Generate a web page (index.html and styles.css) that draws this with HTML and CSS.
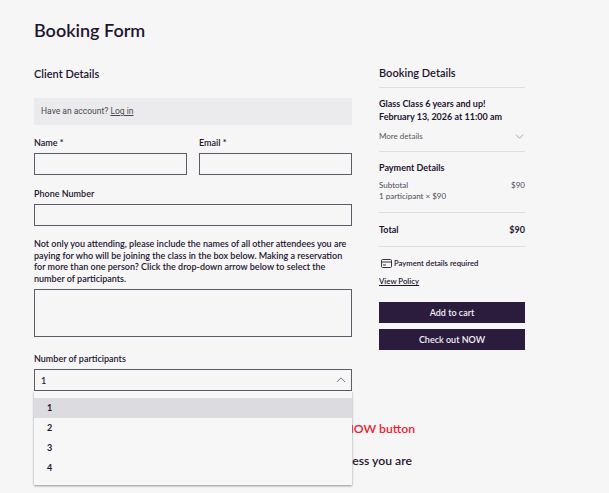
FILE: index.html
```html
<!DOCTYPE html>
<html lang="en">
<head>
<meta charset="utf-8">
<title>Booking Form</title>
<link rel="stylesheet" href="styles.css">
</head>
<body>
<div class="page">
  <h1 class="title">Booking Form</h1>
  <div class="layout">
    <main class="form">
      <h2 class="section">Client Details</h2>
      <div class="alert">Have an account? <a href="#">Log in</a></div>
      <div class="row">
        <div class="field"><label>Name *</label><div class="input"></div></div>
        <div class="field"><label>Email *</label><div class="input"></div></div>
      </div>
      <div class="field phone"><label>Phone Number</label><div class="input"></div></div>
      <div class="field notes">
        <label>Not only you attending, please include the names of all other attendees you are paying for who will be joining the class in the box below. Making a reservation for more than one person? Click the drop-down arrow below to select the number of participants.</label>
        <div class="input area"></div>
      </div>
      <div class="field count">
        <label>Number of participants</label>
        <div class="select-wrap">
          <div class="input select"><span>1</span>
            <svg class="chev" viewBox="0 0 12 7" width="10" height="6"><path d="M1 6l5-5 5 5" fill="none" stroke="#5a5560" stroke-width="1"/></svg>
          </div>
          <ul class="menu">
            <li class="on">1</li>
            <li>2</li>
            <li>3</li>
            <li>4</li>
          </ul>
        </div>
      </div>
      <p class="notice red">NOW button</p>
      <p class="notice dark">ess you are</p>
    </main>
    <aside class="side">
      <h2 class="side-title">Booking Details</h2>
      <div class="block first">
        <div class="class-name">Glass Class 6 years and up!</div>
        <div class="class-name">February 13, 2026 at 11:00 am</div>
        <div class="more"><span>More details</span>
          <svg viewBox="0 0 12 7" width="9" height="5"><path d="M1 1l5 5 5-5" fill="none" stroke="#8a8690" stroke-width="1"/></svg>
        </div>
      </div>
      <div class="block pay">
        <div class="pay-title">Payment Details</div>
        <div class="line"><span>Subtotal</span><span>$90</span></div>
        <div class="line">1 participant × $90</div>
      </div>
      <div class="block total"><span>Total</span><span>$90</span></div>
      <div class="required">
        <svg viewBox="0 0 11 9" width="11" height="9"><rect x=".5" y=".5" width="10" height="8" rx="1" fill="none" stroke="#3a3342"/><path d="M.5 3h10M2 6h3" stroke="#3a3342" fill="none"/></svg>
        <span>Payment details required</span>
      </div>
      <a class="policy" href="#">View Policy</a>
      <button class="btn first-btn">Add to cart</button>
      <button class="btn">Check out NOW</button>
    </aside>
  </div>
</div>
</body>
</html>
```
FILE: styles.css
```css
* { box-sizing: border-box; }
html, body { margin: 0; height: 493px; overflow: hidden; }
body { background: #f6f6f6; color: #1f1430; font-family: Lato, "Open Sans", sans-serif; }
.page { padding: 19px 0 0 34px; }
.title { margin: 0; font-size: 18px; line-height: 23px; font-weight: 600; }
.layout { display: flex; gap: 27px; margin-top: 21px; align-items: flex-start; }
.form { width: 318px; flex: none; padding-top: 3px; }
.section { margin: 0; font-size: 11px; line-height: 16px; font-weight: 600; }
.alert { margin-top: 16px; height: 27px; background: #ebebed; padding-left: 7px; font: 8.5px/27px Roboto, sans-serif; color: #4b4650; }
.alert a { color: inherit; }
.row { display: flex; gap: 12px; margin-top: 12px; }
.row .field { flex: 1; }
label { display: block; font-size: 9px; line-height: 12px; font-weight: 600; margin-bottom: 4px; }
.input { height: 22px; border: 1px solid #5f5a68; background: #f6f6f6; }
.phone { margin-top: 13px; }
.notes { margin-top: 12px; }
.notes label { line-height: 11.5px; margin-bottom: 5px; }
.area { height: 48px; }
.count { margin-top: 16px; }
.count label { margin-bottom: 4px; }
.select-wrap { position: relative; }
.select { display: flex; align-items: center; justify-content: space-between; padding: 0 5px 0 6px; font-size: 9px; font-weight: 600; }
.menu { position: absolute; top: 22px; left: 0; right: 0; margin: 0; padding: 7px 0 7px; list-style: none; background: #f7f7f7; box-shadow: 0 1px 2px rgba(0,0,0,.4); font-size: 9px; font-weight: 700; }
.menu li { height: 20px; line-height: 20px; padding-left: 13px; }
.menu .on { background: #dcdbdf; }
.notice { margin: 0; width: 381px; text-align: right; font-size: 12.2px; line-height: 18px; font-weight: 600; white-space: nowrap; }
.red { color: #ee1c2e; margin-top: 29px; }
.dark { margin-top: 14px; padding-right: 3px; }
.side { width: 146px; flex: none; padding-top: 2px; }
.side-title { margin: 0; padding-bottom: 6px; font-size: 11px; line-height: 16px; font-weight: 600; border-bottom: 1px solid #dedede; }
.block { border-bottom: 1px solid #dedede; }
.first { padding: 9px 0 9px; }
.class-name { font-size: 9px; line-height: 13px; font-weight: 700; }
.more { display: flex; justify-content: space-between; align-items: center; padding-right: 1px; margin-top: 8px; font-size: 8px; line-height: 11px; color: #5a5560; }
.pay { padding: 9px 0 10px; }
.pay-title { font-size: 9px; line-height: 13px; font-weight: 700; margin-bottom: 6px; }
.line { display: flex; justify-content: space-between; font-size: 8px; line-height: 11px; color: #4f4a58; }
.total { display: flex; justify-content: space-between; padding: 10px 0; font-size: 9px; line-height: 13px; font-weight: 700; }
.required { display: flex; align-items: center; gap: 2px; margin: 10px 0 0 2px; font-size: 7.7px; line-height: 12px; font-weight: 600; }
.policy { display: block; margin-top: 7px; font-size: 7.8px; line-height: 11px; font-weight: 600; color: inherit; }
.btn { display: block; width: 146px; height: 21px; margin-top: 6px; padding: 0; border: 0; background: #2b1c3d; color: #f2f0f4; font: 600 9px/21px Lato, sans-serif; }
.first-btn { margin-top: 15px; }
```
